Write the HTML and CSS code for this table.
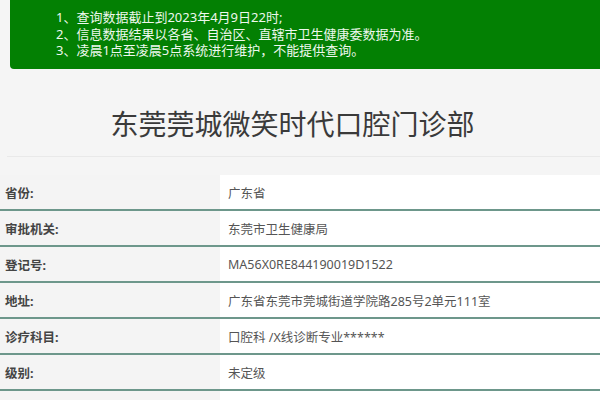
FILE: index.html
```html
<!DOCTYPE html>
<html lang="zh">
<head>
<meta charset="utf-8">
<title>东莞莞城微笑时代口腔门诊部</title>
<link rel="stylesheet" href="styles.css">
</head>
<body>
<div class="notice">
  <p>1、查询数据截止到2023年4月9日22时;</p>
  <p>2、信息数据结果以各省、自治区、直辖市卫生健康委数据为准。</p>
  <p>3、凌晨1点至凌晨5点系统进行维护，不能提供查询。</p>
</div>
<div class="title-wrap">
  <h1 class="title">东莞莞城微笑时代口腔门诊部</h1>
</div>
<div class="table">
  <div class="row"><div class="label">省份:</div><div class="value">广东省</div></div>
  <div class="row"><div class="label">审批机关:</div><div class="value">东莞市卫生健康局</div></div>
  <div class="row"><div class="label">登记号:</div><div class="value">MA56X0RE844190019D1522</div></div>
  <div class="row"><div class="label">地址:</div><div class="value">广东省东莞市莞城街道学院路285号2单元111室</div></div>
  <div class="row"><div class="label">诊疗科目:</div><div class="value">口腔科 /X线诊断专业******</div></div>
  <div class="row"><div class="label">级别:</div><div class="value">未定级</div></div>
  <div class="row"><div class="label">&nbsp;</div><div class="value">&nbsp;</div></div>
</div>
</body>
</html>
```
FILE: styles.css
```css
html, body {
  margin: 0;
  padding: 0;
  background: #f5f5f5;
  font-family: "Noto Sans", "Noto Sans CJK SC", sans-serif;
  overflow: hidden;
}
.notice {
  margin-left: 10px;
  height: 69px;
  box-sizing: border-box;
  padding: 9px 0 0 46px;
  background: #038003;
  border-radius: 0 0 0 4px;
  color: #eef8ee;
  font-size: 13px;
  line-height: 16.5px;
}
.notice p {
  margin: 0;
}
.title-wrap {
  margin-left: 7px;
  height: 88px;
  border-bottom: 1px solid #e9e9e9;
  display: flex;
  align-items: center;
  justify-content: center;
  padding-right: 22px;
  box-sizing: border-box;
}
.title {
  margin: 0;
  padding-top: 20px;
  font-size: 28px;
  font-weight: 400;
  color: #3a3a3a;
  font-family: "Noto Sans CJK SC", sans-serif;
}
.table {
  margin-top: 18px;
}
.row {
  display: grid;
  grid-template-columns: 220px 1fr;
  height: 34px;
  border-bottom: 2px solid #6d978b;
  box-shadow: 0 2px 0 #eaf8f3;
}
.label {
  padding-left: 5px;
  display: flex;
  align-items: center;
  font-size: 12.5px;
  font-weight: 700;
  color: #444;
  background: #f4f4f4;
}
.value {
  padding-left: 8px;
  display: flex;
  align-items: center;
  font-size: 12.5px;
  color: #555;
  background: #fff;
}
```
